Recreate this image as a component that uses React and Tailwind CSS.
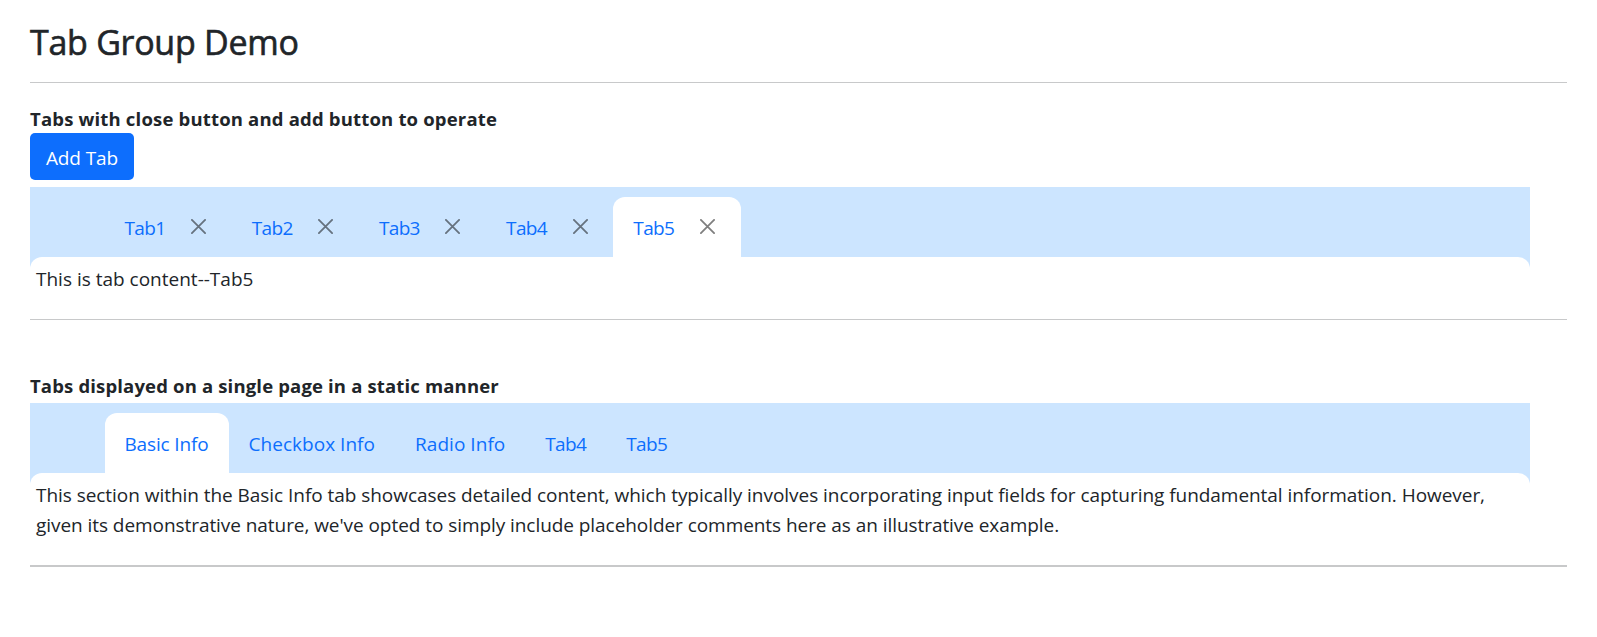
import { useState } from "react";

const initialTabs = ["Tab1", "Tab2", "Tab3", "Tab4", "Tab5"];

const staticTabs = [
  { name: "Basic Info", width: "w-[124px]", tracking: "tracking-[-0.15px]" },
  { name: "Checkbox Info", width: "w-[166.5px]", tracking: "tracking-[0.03px]" },
  { name: "Radio Info", width: "w-[130.2px]", tracking: "tracking-[0.05px]" },
  { name: "Tab4", width: "w-[81px]", tracking: "tracking-[-0.65px]" },
  { name: "Tab5", width: "w-[81px]", tracking: "tracking-[-0.65px]" },
];

function CloseIcon() {
  return (
    <svg width="15" height="15" viewBox="0 0 15 15" fill="none" stroke="#000" strokeOpacity="0.5" strokeWidth="1.8" strokeLinecap="round">
      <path d="M0.9 0.9 14.1 14.1M14.1 0.9 0.9 14.1" />
    </svg>
  );
}

function TabBar({ children }) {
  return <div className="flex h-[82px] bg-[#cce5ff] pt-[10px] pl-[74.5px]">{children}</div>;
}

function Panel({ children }) {
  return <div className="-mt-3 rounded-t-[12px] bg-white px-[6px] pt-[7px] leading-[30px]">{children}</div>;
}

function Rule({ thick }) {
  return <div className={thick ? "h-[2px] bg-[#c8c9ca]" : "h-px bg-[#c8c9ca]"} />;
}

export default function App() {
  const [tabs, setTabs] = useState(initialTabs);
  const [active, setActive] = useState("Tab5");
  const [page, setPage] = useState("Basic Info");
  const addTab = () => setTabs([...tabs, `Tab${tabs.length + 1}`]);

  return (
    <main className="h-[637px] bg-white pl-[30px] pr-[30px] font-['Open_Sans','Noto_Sans',sans-serif] text-[19px] text-[#212529]">
      <h1 className="pt-[21px] pb-[19px] text-[34px] leading-[42px] tracking-[-0.28px] [-webkit-text-stroke:0.6px_#212529]">Tab Group Demo</h1>
      <Rule />

      <section>
        <h2 className="pt-[22px] text-[18.5px] font-bold leading-[28px] tracking-[0.18px]">Tabs with close button and add button to operate</h2>
        <button onClick={addTab} className="block h-[47px] w-[104px] rounded-[5px] bg-[#0d6efd] pt-[4px] tracking-[-0.1px] text-white">
          Add Tab
        </button>
        <div className="mt-[7px] mr-[37px]">
          <TabBar>
            {tabs.map((t) => (
              <div
                key={t}
                onClick={() => setActive(t)}
                className={`-mr-[0.8px] flex h-[60px] w-[128px] cursor-pointer items-center justify-between rounded-t-[12px] pl-5 pr-[26.5px] text-[#0d6efd] ${t === active ? "bg-white" : ""}`}
              >
                <span className="pt-[3px] tracking-[-0.65px]">{t}</span>
                <button aria-label="Close" className="pb-[1px]" onClick={(e) => { e.stopPropagation(); setTabs(tabs.filter((x) => x !== t)); }}>
                  <CloseIcon />
                </button>
              </div>
            ))}
          </TabBar>
          <Panel>This is tab content--{active}</Panel>
        </div>
        <div className="pt-[25px]"><Rule /></div>
      </section>

      <section>
        <h2 className="pt-[51px] pb-[3px] text-[18.5px] font-bold leading-[29px] tracking-[0.16px]">Tabs displayed on a single page in a static manner</h2>
        <div className="mr-[37px]">
          <TabBar>
            {staticTabs.map((t) => (
              <button
                key={t.name}
                onClick={() => setPage(t.name)}
                className={`h-[60px] rounded-t-[12px] pt-[3px] pl-5 text-left whitespace-nowrap text-[#0d6efd] ${t.width} ${t.tracking} ${t.name === page ? "bg-white" : ""}`}
              >
                {t.name}
              </button>
            ))}
          </TabBar>
          <Panel>
            <p className="tracking-[-0.045px] whitespace-nowrap">
              This section within the Basic Info tab showcases detailed content, which typically involves incorporating input fields for capturing fundamental information. However,
            </p>
            <p className="tracking-[-0.06px] whitespace-nowrap">
              given its demonstrative nature, we've opted to simply include placeholder comments here as an illustrative example.
            </p>
          </Panel>
        </div>
        <div className="pt-[25px]"><Rule thick /></div>
      </section>
    </main>
  );
}
